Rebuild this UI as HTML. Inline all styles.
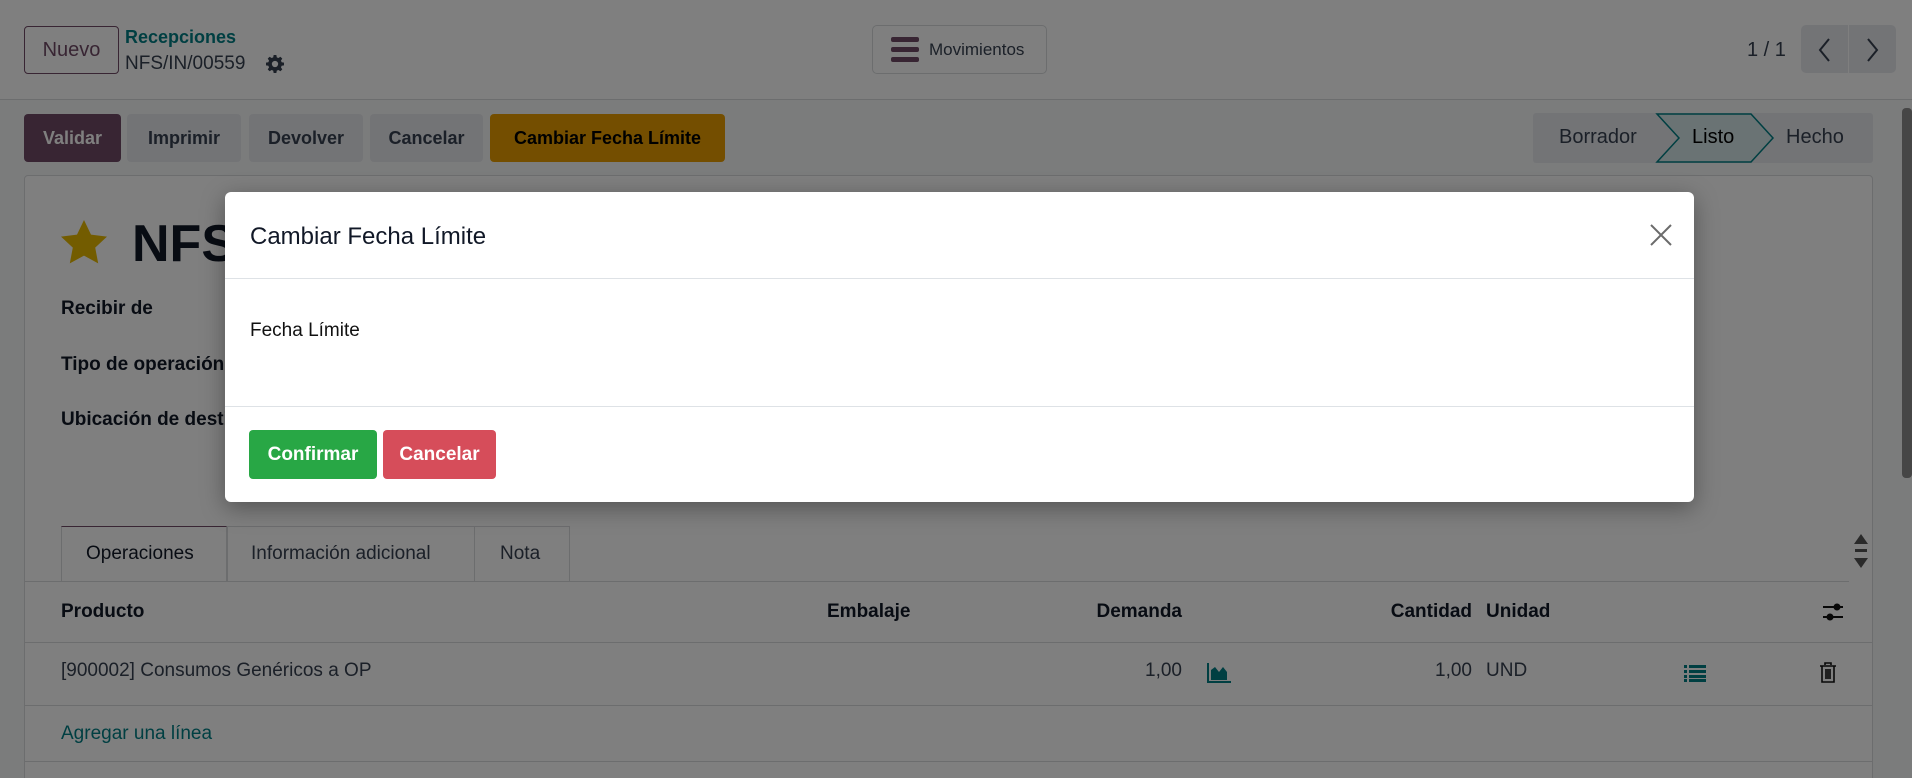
<!DOCTYPE html>
<html style="overflow:hidden;width:1912px;height:778px"><head><meta charset="utf-8"><style>
*{box-sizing:border-box;margin:0;padding:0}
body{width:1912px;height:778px;overflow:hidden;background:#f6f8f9;font-family:"Liberation Sans",sans-serif;color:#1f2329;position:relative;font-size:18px}
.abs{position:absolute}
.top{left:0;top:0;width:1912px;height:100px;background:#fff;border-bottom:1px solid #d8dadd}
.btn{position:absolute;display:flex;align-items:center;justify-content:center;border-radius:4px;font-size:18px;font-weight:bold;white-space:nowrap}
.g{background:#e7e9ed;color:#374151}
.card{left:24px;top:175px;width:1849px;height:610px;background:#fff;border:1px solid #d8dadd;border-radius:4px}
.lbl{position:absolute;left:61px;font-weight:bold;font-size:19px;color:#111827}
.th{position:absolute;font-weight:bold;font-size:19px;color:#111827}
.td{position:absolute;font-size:19px;color:#374151}
.hl{position:absolute;height:1px;background:#d8dadd}
.ov{left:0;top:0;width:1912px;height:778px;background:rgba(0,0,0,.5)}
.modal{left:225px;top:192px;width:1469px;height:310px;background:#fff;border-radius:6px;box-shadow:0 6px 24px rgba(0,0,0,.35)}
</style></head><body>
<div class="abs top"></div>
<div class="btn" style="left:24px;top:26px;width:95px;height:48px;border:1px solid #714b67;color:#714b67;background:#fff;font-weight:normal;font-size:20px">Nuevo</div>
<div class="abs" style="left:125px;top:27px;font-size:18px;color:#017e84;font-weight:bold">Recepciones</div>
<div class="abs" style="left:125px;top:53px;font-size:19px;color:#374151">NFS/IN/00559</div>
<svg class="abs" style="left:266px;top:55px" width="18" height="18" viewBox="0 0 20 20"><path fill="#374151" d="M8.5 0h3l.5 2.6 1.8.8 2.2-1.5 2.1 2.1-1.5 2.2.8 1.8 2.6.5v3l-2.6.5-.8 1.8 1.5 2.2-2.1 2.1-2.2-1.5-1.8.8-.5 2.6h-3l-.5-2.6-1.8-.8-2.2 1.5-2.1-2.1 1.5-2.2-.8-1.8L0 11.5v-3l2.6-.5.8-1.8-1.5-2.2 2.1-2.1 2.2 1.5 1.8-.8zM10 6.5a3.5 3.5 0 1 0 0 7 3.5 3.5 0 0 0 0-7z"/></svg>
<div class="abs" style="left:872px;top:25px;width:175px;height:49px;border:1px solid #d8dadd;border-radius:5px;background:#fff"></div>
<div class="abs" style="left:891px;top:37px;width:28px;height:5px;background:#714b67;border-radius:2px"></div>
<div class="abs" style="left:891px;top:47px;width:28px;height:5px;background:#714b67;border-radius:2px"></div>
<div class="abs" style="left:891px;top:57px;width:28px;height:5px;background:#714b67;border-radius:2px"></div>
<div class="abs" style="left:929px;top:40px;font-size:17px;color:#374151">Movimientos</div>
<div class="abs" style="left:1747px;top:39px;font-size:20px;color:#374151">1 / 1</div>
<div class="abs" style="left:1801px;top:25px;width:95px;height:48px;background:#e7e9ed;border-radius:5px"></div>
<div class="abs" style="left:1848px;top:25px;width:1px;height:48px;background:#fff"></div>
<svg class="abs" style="left:1815px;top:36px" width="20" height="28"><path d="M14 3 5 14l9 11" fill="none" stroke="#374151" stroke-width="2"/></svg>
<svg class="abs" style="left:1862px;top:36px" width="20" height="28"><path d="M6 3l9 11-9 11" fill="none" stroke="#374151" stroke-width="2"/></svg>

<div class="btn" style="left:24px;top:114px;width:97px;height:48px;background:#714b67;color:#fff">Validar</div>
<div class="btn g" style="left:127px;top:114px;width:114px;height:48px">Imprimir</div>
<div class="btn g" style="left:249px;top:114px;width:114px;height:48px">Devolver</div>
<div class="btn g" style="left:370px;top:114px;width:113px;height:48px">Cancelar</div>
<div class="btn" style="left:490px;top:114px;width:235px;height:48px;background:#e99d00;color:#000">Cambiar Fecha Límite</div>
<div class="abs" style="left:1533px;top:113px;width:340px;height:50px;background:#e7e9ed;border-radius:3px"></div>
<svg class="abs" style="left:1655px;top:113px" width="124" height="50"><path d="M2 1h94l22 24-22 24H2l22-24z" fill="#d4e7e8" stroke="#017e84" stroke-width="1.5"/></svg>
<div class="abs" style="left:1559px;top:126px;font-size:20px;color:#374151">Borrador</div>
<div class="abs" style="left:1692px;top:126px;font-size:20px;color:#000">Listo</div>
<div class="abs" style="left:1786px;top:126px;font-size:20px;color:#374151">Hecho</div>
<div class="abs" style="left:1902px;top:108px;width:10px;height:370px;background:#8c8c8c;border-radius:4px"></div>

<div class="abs card"></div>
<svg class="abs" style="left:60px;top:220px" width="48" height="44" viewBox="0 0 24 22"><path d="M12 0l3.5 7.3 8 1-5.9 5.5 1.5 7.9L12 17.8 4.9 21.7l1.5-7.9L.5 8.3l8-1z" fill="#e6b800"/></svg>
<div class="abs" style="left:132px;top:214px;font-size:52px;font-weight:bold;color:#111827">NFS/IN/00559</div>
<div class="lbl" style="top:298px">Recibir de</div>
<div class="lbl" style="top:354px">Tipo de operación</div>
<div class="lbl" style="top:409px">Ubicación de destino</div>

<div class="abs" style="left:61px;top:526px;width:166px;height:56px;background:#fff;border:1px solid #d8dadd;border-top:1px solid #714b67;border-bottom:none"></div>
<div class="abs" style="left:227px;top:526px;width:248px;height:55px;border:1px solid #d8dadd;border-bottom:none"></div>
<div class="abs" style="left:474px;top:526px;width:96px;height:55px;border:1px solid #d8dadd;border-bottom:none"></div>
<div class="td" style="left:86px;top:543px;color:#111827">Operaciones</div>
<div class="td" style="left:251px;top:543px">Información adicional</div>
<div class="td" style="left:500px;top:543px">Nota</div>
<div class="hl" style="left:25px;top:581px;width:1824px"></div>
<svg class="abs" style="left:1852px;top:530px" width="18" height="48"><path d="M2 14 9 4l7 10z M3 19h12v3H3z M2 28h14l-7 10z" fill="#555"/></svg>

<div class="th" style="left:61px;top:601px">Producto</div>
<div class="th" style="left:827px;top:601px">Embalaje</div>
<div class="th" style="left:1092px;top:601px;width:90px;text-align:right">Demanda</div>
<div class="th" style="left:1372px;top:601px;width:100px;text-align:right">Cantidad</div>
<div class="th" style="left:1486px;top:601px">Unidad</div>
<svg class="abs" style="left:1822px;top:602px" width="22" height="20"><path d="M1 5h20M1 15h20" stroke="#111" stroke-width="2"/><circle cx="15" cy="5" r="3.5" fill="#111"/><circle cx="8" cy="15" r="3.5" fill="#111"/></svg>
<div class="hl" style="left:25px;top:642px;width:1847px"></div>
<div class="td" style="left:61px;top:660px">[900002] Consumos Genéricos a OP</div>
<div class="td" style="left:1092px;top:660px;width:90px;text-align:right">1,00</div>
<svg class="abs" style="left:1207px;top:663px" width="24" height="20"><path d="M1 0v19h23" fill="none" stroke="#017e84" stroke-width="2"/><path d="M4 17V7l4-3 4 5 4-5 4 5v8z" fill="#017e84"/></svg>
<div class="td" style="left:1372px;top:660px;width:100px;text-align:right">1,00</div>
<div class="td" style="left:1486px;top:660px">UND</div>
<svg class="abs" style="left:1684px;top:664px" width="22" height="18"><path d="M0 1h3v3H0zm5 0h17v3H5zM0 6h3v3H0zm5 0h17v3H5zM0 11h3v3H0zm5 0h17v3H5zM0 15h3v3H0zm5 0h17v3H5z" fill="#017e84"/></svg>
<svg class="abs" style="left:1819px;top:662px" width="18" height="22"><path d="M6 3V1h6v2M1 4h16M3 4v16h12V4M7 7v10M9 7v10M11 7v10" fill="none" stroke="#111" stroke-width="1.6"/></svg>
<div class="hl" style="left:25px;top:705px;width:1847px"></div>
<div class="td" style="left:61px;top:723px;color:#017e84">Agregar una línea</div>
<div class="hl" style="left:25px;top:761px;width:1847px"></div>

<div class="abs ov"></div>
<div class="abs modal">
  <div class="abs" style="left:25px;top:31px;font-size:24px;color:#111827">Cambiar Fecha Límite</div>
  <svg class="abs" style="left:1424px;top:31px" width="24" height="24"><path d="M2 2l20 20M22 2 2 22" stroke="#6b6b6b" stroke-width="2"/></svg>
  <div class="hl" style="left:0;top:86px;width:1469px;background:#dee2e6"></div>
  <div class="abs" style="left:25px;top:128px;font-size:19px;color:#111">Fecha Límite</div>
  <div class="hl" style="left:0;top:214px;width:1469px;background:#dee2e6"></div>
  <div class="btn" style="left:24px;top:238px;width:128px;height:49px;background:#28a745;color:#fff;font-size:19px">Confirmar</div>
  <div class="btn" style="left:158px;top:238px;width:113px;height:49px;background:#d64d5a;color:#fff;font-size:19px">Cancelar</div>
</div>
</body></html>
